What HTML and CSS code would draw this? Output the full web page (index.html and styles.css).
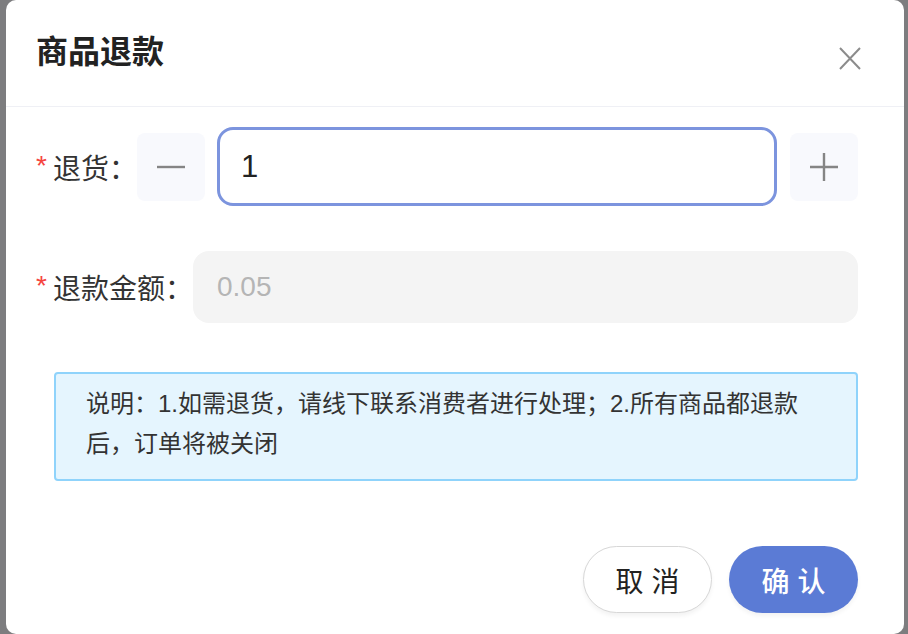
FILE: index.html
```html
<!DOCTYPE html>
<html lang="zh-CN">
<head>
<meta charset="utf-8">
<title>商品退款</title>
<link rel="stylesheet" href="styles.css">
</head>
<body>
<div class="backdrop">
  <div class="dialog">
    <div class="dialog-header">
      <div class="dialog-title">商品退款</div>
      <button class="close-btn" aria-label="关闭">
        <svg width="22" height="23" viewBox="0 0 22 23"><path d="M1 1 L21 22 M21 1 L1 22" stroke="#8c8c8c" stroke-width="2" fill="none"/></svg>
      </button>
    </div>
    <div class="dialog-body">
      <div class="form-row">
        <span class="star">*</span><span class="label">退货：</span>
        <div class="stepper">
          <button class="step-btn" aria-label="减少">
            <svg width="28" height="28" viewBox="0 0 28 28"><path d="M0 14 H28" stroke="#858585" stroke-width="2.4"/></svg>
          </button>
          <div class="qty-input">1</div>
          <button class="step-btn" aria-label="增加">
            <svg width="28" height="28" viewBox="0 0 28 28"><path d="M0 14 H28 M14 0 V28" stroke="#858585" stroke-width="2.4"/></svg>
          </button>
        </div>
      </div>
      <div class="form-row row-amount">
        <span class="star">*</span><span class="label">退款金额：</span>
        <div class="amount-input">0.05</div>
      </div>
      <div class="notice">说明：1.如需退货，请线下联系消费者进行处理；2.所有商品都退款后，订单将被关闭</div>
      <div class="dialog-footer">
        <button class="btn btn-cancel">取 消</button>
        <button class="btn btn-primary">确 认</button>
      </div>
    </div>
  </div>
</div>
</body>
</html>
```
FILE: styles.css
```css
html, body {
  margin: 0;
  padding: 0;
  height: 100%;
  overflow: hidden;
}
body {
  background: #7d7d7f;
  font-family: "Liberation Sans", "Noto Sans CJK SC", sans-serif;
  color: #262626;
}
.backdrop {
  display: flex;
  padding-left: 6px;
  height: 634px;
}
.dialog {
  width: 898px;
  height: 634px;
  background: #fff;
  border-radius: 10px;
  display: flex;
  flex-direction: column;
}
.dialog-header {
  display: flex;
  justify-content: space-between;
  align-items: flex-start;
  padding: 32px 43px 34px 30px;
  border-bottom: 1px solid #eff0f5;
}
.dialog-title {
  font-size: 32px;
  line-height: 40px;
  font-weight: 700;
  color: #222;
}
.close-btn {
  margin-top: 15px;
  padding: 0;
  border: 0;
  background: none;
  width: 22px;
  height: 23px;
  display: flex;
}
.dialog-body {
  padding: 20px 46px 0 30px;
  display: flex;
  flex-direction: column;
}
.form-row {
  display: flex;
  align-items: center;
  height: 79px;
}
.row-amount {
  margin-top: 45px;
  height: 72px;
}
.star {
  width: 17px;
  color: #f5453f;
  font-size: 28px;
  line-height: 28px;
  align-self: center;
  margin-bottom: 2px;
}
.label {
  font-size: 28px;
  color: #333;
  white-space: nowrap;
}
.stepper {
  flex: 1;
  display: flex;
  align-items: center;
}
.step-btn {
  width: 68px;
  height: 68px;
  border: 0;
  border-radius: 8px;
  background: #f8f9fd;
  display: flex;
  align-items: center;
  justify-content: center;
  padding: 0;
}
.qty-input {
  flex: 1;
  height: 79px;
  box-sizing: border-box;
  margin: 0 13px 0 12px;
  border: 3px solid #7c94de;
  border-radius: 16px;
  padding: 0 21px;
  display: flex;
  align-items: center;
  font-size: 31px;
  color: #222;
}
.amount-input {
  flex: 1;
  height: 72px;
  box-sizing: border-box;
  background: #f4f4f4;
  border-radius: 16px;
  padding: 0 24px;
  display: flex;
  align-items: center;
  font-size: 28px;
  color: #b5b5b5;
}
.notice {
  margin: 49px 0 0 18px;
  border: 2px solid #8fd3fb;
  border-radius: 4px;
  background: #e5f5fe;
  padding: 10px 40px 15px 30px;
  font-size: 24px;
  line-height: 40px;
  color: #333;
}
.dialog-footer {
  margin-top: 65px;
  display: flex;
  justify-content: flex-end;
  gap: 17px;
}
.btn {
  width: 129px;
  height: 67px;
  border-radius: 34px;
  font-family: "Liberation Sans", "Noto Sans CJK SC", sans-serif;
  font-size: 28px;
  padding: 0;
  box-shadow: 0 3px 4px rgba(0, 0, 0, 0.05);
}
.btn-cancel {
  background: #fff;
  border: 1.5px solid #d7d7d7;
  color: #222;
}
.btn-primary {
  background: #5b7bd5;
  border: 0;
  color: #fff;
  font-weight: 500;
}
```
